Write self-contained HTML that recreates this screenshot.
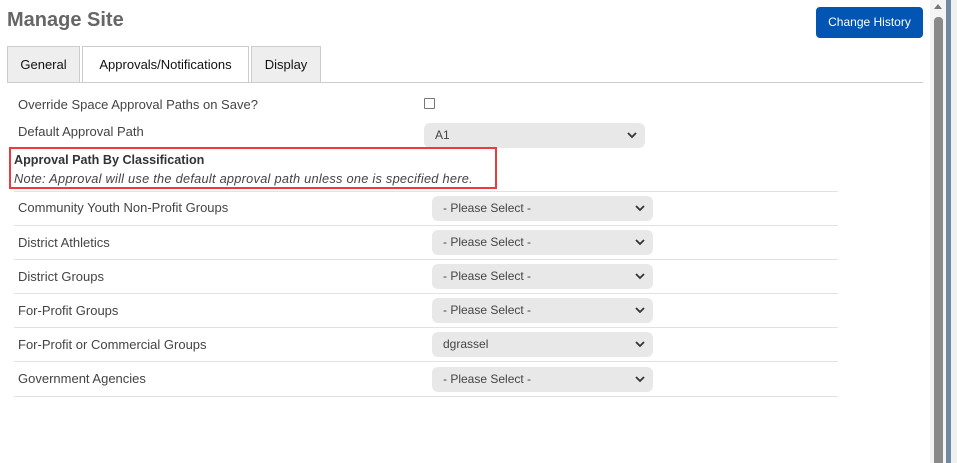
<!DOCTYPE html>
<html><head><style>
body{margin:0;width:957px;height:463px;background:#fff;font-family:"Liberation Sans",sans-serif;position:relative;overflow:hidden;color:#333}
.a{position:absolute}
h1{position:absolute;left:7px;top:9px;margin:0;font-size:20px;font-weight:bold;color:#666}
.btn{left:816px;top:7px;width:107px;height:31px;background:#0255b3;border-radius:4px;color:#fff;font-size:12px;text-align:center;line-height:30px}
.tab{top:46px;height:36px;border:1px solid #ccc;border-bottom:none;background:#eee;font-size:13px;color:#111;text-align:center;line-height:36px;box-sizing:border-box}
.lbl{font-size:13px;color:#444;left:18px}
.sel{background:#e8e8e8;border-radius:6px;height:25px;font-size:12px;color:#444;line-height:25px;box-sizing:border-box;padding-left:11px}
.sel svg{position:absolute;right:8px;top:9px}
.sep{left:14px;width:824px;height:1px;background:#e2e2e2}
</style></head><body>
<h1>Manage Site</h1>
<div class="a btn">Change History</div>
<div class="a tab" style="left:7px;width:73px">General</div>
<div class="a tab" style="left:82px;width:167px;background:#fff;height:37px">Approvals/Notifications</div>
<div class="a tab" style="left:251px;width:70px">Display</div>
<div class="a" style="left:7px;top:82px;width:916px;height:1px;background:#ccc"></div>
<div class="a lbl" style="top:97px">Override Space Approval Paths on Save?</div>
<div class="a" style="left:424px;top:98px;width:9px;height:9px;border:1px solid #777;border-radius:1px"></div>
<div class="a lbl" style="top:124px">Default Approval Path</div>
<div class="a sel" style="left:424px;top:123px;width:221px">A1<svg width="10" height="7"><path d="M1 1l4 4 4-4" stroke="#333" stroke-width="1.8" fill="none"/></svg></div>
<div class="a" style="left:9px;top:147px;width:484px;height:38px;border:2px solid #f0383f"></div>
<div class="a" style="left:14px;top:153px;font-size:12.6px;font-weight:bold;color:#333">Approval Path By Classification</div>
<div class="a" style="left:14px;top:171px;font-size:12.8px;font-style:italic;color:#444;letter-spacing:0.25px">Note: Approval will use the default approval path unless one is specified here.</div>
<div class="a sep" style="top:191px"></div>
<div class="a lbl" style="top:200px">Community Youth Non-Profit Groups</div>
<div class="a sel" style="left:432px;top:196px;width:221px">- Please Select -<svg width="10" height="7"><path d="M1 1l4 4 4-4" stroke="#333" stroke-width="1.8" fill="none"/></svg></div>
<div class="a sep" style="top:225px"></div>
<div class="a lbl" style="top:235px">District Athletics</div>
<div class="a sel" style="left:432px;top:230px;width:221px">- Please Select -<svg width="10" height="7"><path d="M1 1l4 4 4-4" stroke="#333" stroke-width="1.8" fill="none"/></svg></div>
<div class="a sep" style="top:259px"></div>
<div class="a lbl" style="top:269px">District Groups</div>
<div class="a sel" style="left:432px;top:264px;width:221px">- Please Select -<svg width="10" height="7"><path d="M1 1l4 4 4-4" stroke="#333" stroke-width="1.8" fill="none"/></svg></div>
<div class="a sep" style="top:293px"></div>
<div class="a lbl" style="top:303px">For-Profit Groups</div>
<div class="a sel" style="left:432px;top:298px;width:221px">- Please Select -<svg width="10" height="7"><path d="M1 1l4 4 4-4" stroke="#333" stroke-width="1.8" fill="none"/></svg></div>
<div class="a sep" style="top:327px"></div>
<div class="a lbl" style="top:337px">For-Profit or Commercial Groups</div>
<div class="a sel" style="left:432px;top:332px;width:221px">dgrassel<svg width="10" height="7"><path d="M1 1l4 4 4-4" stroke="#333" stroke-width="1.8" fill="none"/></svg></div>
<div class="a sep" style="top:361px"></div>
<div class="a lbl" style="top:371px">Government Agencies</div>
<div class="a sel" style="left:432px;top:367px;width:221px">- Please Select -<svg width="10" height="7"><path d="M1 1l4 4 4-4" stroke="#333" stroke-width="1.8" fill="none"/></svg></div>
<div class="a sep" style="top:396px"></div>
<div class="a" style="left:930px;top:0;width:16px;height:463px;background:#f4f4f4"></div>
<div class="a" style="left:934px;top:4px;width:0;height:0;border-left:4px solid transparent;border-right:4px solid transparent;border-bottom:5px solid #777"></div>
<div class="a" style="left:934px;top:17px;width:9px;height:446px;background:#8a8a8a;border-radius:4px 4px 0 0"></div>
<div class="a" style="left:946px;top:0;width:5px;height:463px;background:#7088a0"></div>
<div class="a" style="left:951px;top:0;width:6px;height:463px;background:#eef0f2"></div>
</body></html>
